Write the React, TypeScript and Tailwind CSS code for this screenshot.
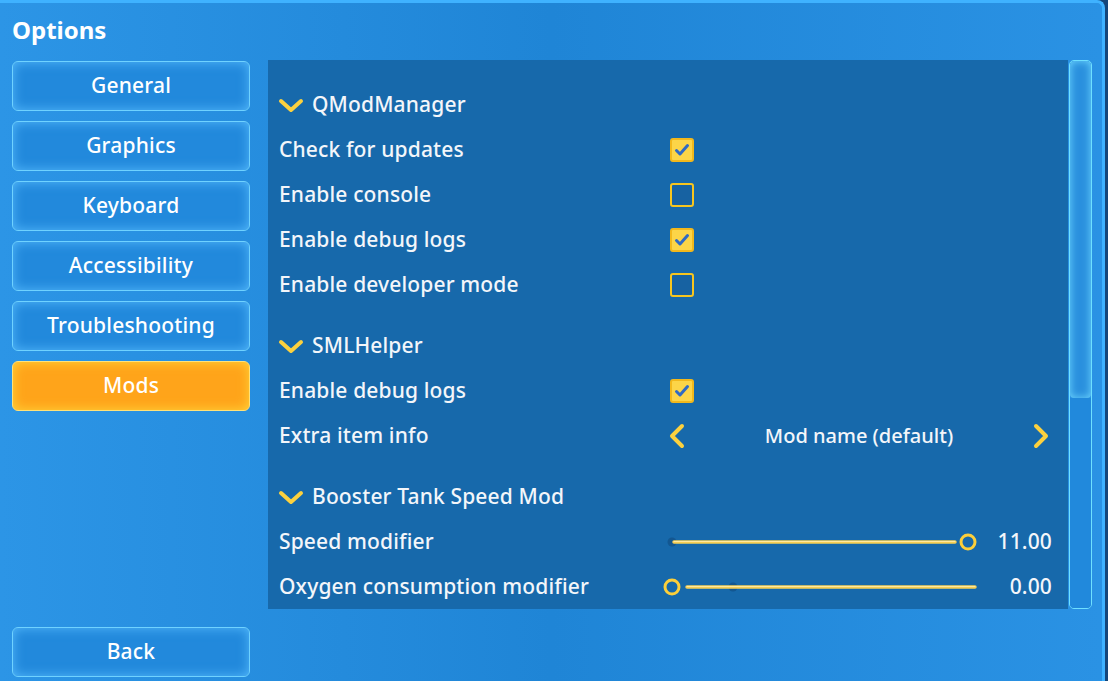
import React from "react";

const FONT = { fontFamily: '"Noto Sans", "Open Sans", sans-serif' };

type Row =
  | { kind: "check"; label: string; checked: boolean }
  | { kind: "choice"; label: string; value: string }
  | { kind: "slider"; label: string; value: string; thumb: number; dot: number; start: number; end: number };

type Section = { title: string; rows: Row[] };

const sections: Section[] = [
  {
    title: "QModManager",
    rows: [
      { kind: "check", label: "Check for updates", checked: true },
      { kind: "check", label: "Enable console", checked: false },
      { kind: "check", label: "Enable debug logs", checked: true },
      { kind: "check", label: "Enable developer mode", checked: false },
    ],
  },
  {
    title: "SMLHelper",
    rows: [
      { kind: "check", label: "Enable debug logs", checked: true },
      { kind: "choice", label: "Extra item info", value: "Mod name (default)" },
    ],
  },
  {
    title: "Booster Tank Speed Mod",
    rows: [
      { kind: "slider", label: "Speed modifier", value: "11.00", thumb: 306, dot: 10, start: 12, end: 293 },
      { kind: "slider", label: "Oxygen consumption modifier", value: "0.00", thumb: 10, dot: 71, start: 25, end: 313 },
    ],
  },
];

const menu = ["General", "Graphics", "Keyboard", "Accessibility", "Troubleshooting", "Mods"];

const TEXT = "text-[21px] font-medium tracking-[0.15px] text-[#f3f6fa]";

function MenuButton({ label, active }: { label: string; active?: boolean }) {
  return (
    <button
      className={
        active
          ? "h-[50px] w-full rounded-[6px] border border-[#ffe27a] bg-[#ffa41a] text-[21px] font-medium tracking-[0.2px] text-white shadow-[inset_0_0_12px_#ffd53a]"
          : "h-[50px] w-full rounded-[6px] border border-[#6fd2ff] bg-[#2289dc] text-[21px] font-medium tracking-[0.2px] text-white shadow-[inset_0_0_12px_rgba(90,190,255,0.9)]"
      }
    >
      {label}
    </button>
  );
}

function Checkbox({ checked }: { checked: boolean }) {
  return (
    <div
      className={
        checked
          ? "flex h-[24px] w-[24px] items-center justify-center rounded-[3px] border-2 border-[#f2b81c] bg-[#fcd548]"
          : "h-[24px] w-[24px] rounded-[3px] border-2 border-[#f7c51e] bg-[#1762a2]"
      }
    >
      {checked && (
        <svg width="16" height="14" viewBox="0 0 16 14">
          <path d="M2.5 7.5 L6 11 L13.5 2.5" fill="none" stroke="#2f6ac4" strokeWidth="3" strokeLinecap="round" strokeLinejoin="round" />
        </svg>
      )}
    </div>
  );
}

function Chevron({ dir }: { dir: "left" | "right" }) {
  return (
    <svg width="18" height="26" viewBox="0 0 18 26">
      <path
        d={dir === "left" ? "M14 3 L4 13 L14 23" : "M4 3 L14 13 L4 23"}
        fill="none"
        stroke="#fcd13f"
        strokeWidth="4"
        strokeLinecap="round"
        strokeLinejoin="round"
      />
    </svg>
  );
}

function Slider({ thumb, dot, start, end }: { thumb: number; dot: number; start: number; end: number }) {
  return (
    <svg width="320" height="24" viewBox="0 0 320 24" className="ml-[-8px] overflow-visible">
      <circle cx={dot} cy="12" r="4.5" fill="#13558e" opacity="0.9" />
      <line x1={start} y1="12" x2={end} y2="12" stroke="#f6cf55" strokeWidth="3.5" strokeLinecap="round" />
      <line x1={start} y1="11.5" x2={end} y2="11.5" stroke="#ffe9a0" strokeWidth="1" strokeLinecap="round" />
      <circle cx={thumb} cy="12" r="7" fill="#1769ab" stroke="#fccf3a" strokeWidth="3" />
    </svg>
  );
}

function OptionRow({ row }: { row: Row }) {
  return (
    <div className="flex h-[45px] items-center">
      <div className={`w-[391px] ${TEXT}`}>{row.label}</div>
      <div className="flex w-[382px] items-center">
        {row.kind === "check" && <Checkbox checked={row.checked} />}
        {row.kind === "choice" && (
          <div className="flex w-full items-center justify-between">
            <div className="ml-[-2px]">
              <Chevron dir="left" />
            </div>
            <span className="text-[20px] font-medium text-[#f3f6fa]">{row.value}</span>
            <div className="mr-[2px]">
              <Chevron dir="right" />
            </div>
          </div>
        )}
        {row.kind === "slider" && (
          <>
            <Slider thumb={row.thumb} dot={row.dot} start={row.start} end={row.end} />
            <span className={`ml-[-8px] w-[78px] text-right ${TEXT}`}>{row.value}</span>
          </>
        )}
      </div>
    </div>
  );
}

export default function App() {
  return (
    <div className="h-[681px] w-[1108px] overflow-hidden bg-[#15467a]" style={FONT}>
      <div className="flex h-[681px] w-[1105px] rounded-tr-[8px] border-t-[3px] border-r-[3px] border-[#3fb2ff] bg-gradient-to-r from-[#2c95e6] via-[#1f85d6] to-[#2a92e4]">
        <div className="flex w-[268px] flex-col pl-[12px]">
          <div className="h-[58px] pt-[9px] text-[24px] font-bold text-white">Options</div>
          <div className="flex w-[238px] flex-col gap-[10px]">
            {menu.map((m) => (
              <MenuButton key={m} label={m} active={m === "Mods"} />
            ))}
          </div>
          <div className="mt-auto mb-[4px] w-[238px]">
            <MenuButton label="Back" />
          </div>
        </div>
        <div className="flex pt-[57px]">
          <div className="h-[549px] w-[800px] bg-[#1769ab] pt-[22px] pl-[11px]">
            {sections.map((s, i) => (
              <div key={s.title} className={i > 0 ? "mt-[16px]" : ""}>
                <div className="flex h-[45px] items-center">
                  <svg width="26" height="18" viewBox="0 0 26 18" className="ml-[-1px] mr-[8px]">
                    <path d="M3 5 L13 14 L23 5" fill="none" stroke="#fcd13f" strokeWidth="4" strokeLinecap="round" strokeLinejoin="round" />
                  </svg>
                  <span className={TEXT}>{s.title}</span>
                </div>
                {s.rows.map((r) => (
                  <OptionRow key={r.label + s.title} row={r} />
                ))}
              </div>
            ))}
          </div>
          <div className="ml-[1px] flex h-[549px] w-[23px] flex-col overflow-hidden rounded-[5px] border border-[#6fe0ff]">
            <div className="h-[337px] rounded-[4px] bg-[#2a90de] shadow-[inset_0_0_8px_#6fd8ff]" />
            <div className="flex-1 bg-[#2189dc]" />
          </div>
        </div>
      </div>
    </div>
  );
}
